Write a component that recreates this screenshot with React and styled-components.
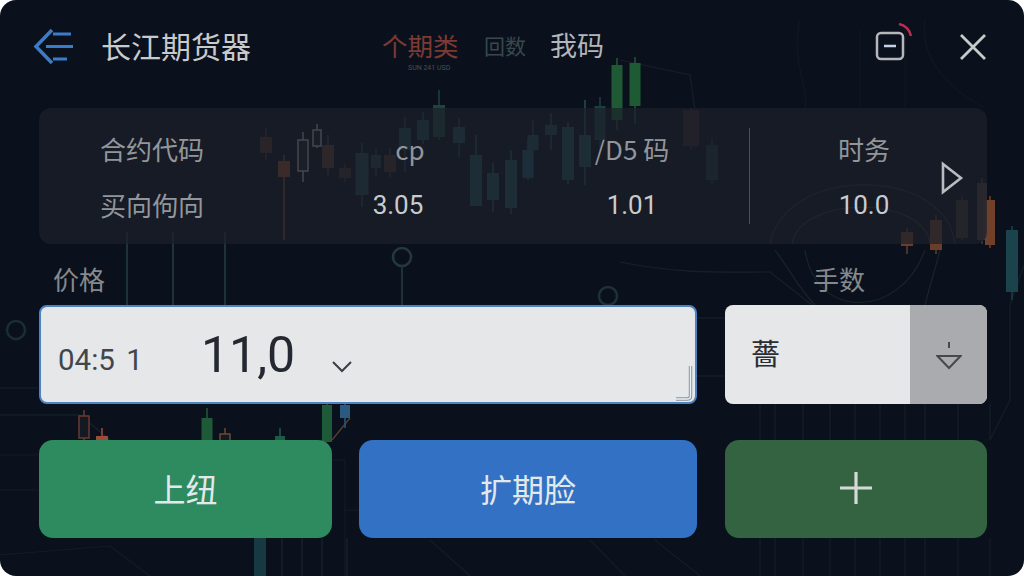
import React from 'react'
import styled, { createGlobalStyle } from 'styled-components'

const CJK = `"Noto Sans CJK SC", "Noto Sans", sans-serif`
const NUM = `Roboto, "Noto Sans CJK SC", sans-serif`

/* x, body top, body bottom, wick top, wick bottom, colour, body width, hollow */
const candles = [
  [266, 137, 153, 128, 160, '#4a2f27', 12],
  [284, 161, 177, 155, 240, '#8a452b', 12],
  [303, 140, 171, 132, 182, '#a5a8ac', 10, true],
  [317, 130, 146, 124, 148, '#a5a8ac', 8, true],
  [328, 145, 168, 135, 175, '#5a3a2c', 12],
  [345, 168, 178, 164, 182, '#3c2d28', 12],
  [362, 153, 195, 143, 207, '#24454c', 13],
  [376, 155, 168, 148, 177, '#2a3b40', 10],
  [390, 155, 172, 148, 177, '#47312a', 12],
  [405, 128, 150, 117, 172, '#1f4a4e', 12],
  [423, 120, 140, 112, 144, '#1f4a4e', 12],
  [439, 105, 137, 90, 140, '#1d4440', 12],
  [459, 127, 143, 118, 157, '#1f4a50', 12],
  [476, 155, 206, 135, 206, '#1f5058', 12],
  [493, 173, 200, 163, 212, '#1f5058', 12],
  [511, 160, 208, 150, 214, '#1f5058', 12],
  [528, 150, 178, 140, 180, '#1f5462', 11],
  [533, 135, 150, 120, 152, '#1f4a50', 11],
  [551, 125, 135, 113, 150, '#27474c', 12],
  [568, 127, 180, 122, 184, '#1f5058', 12],
  [585, 135, 167, 100, 185, '#1f5058', 12],
  [600, 106, 140, 97, 150, '#1c3f40', 11],
  [617, 65, 120, 58, 130, '#1e5a34', 11],
  [635, 63, 106, 57, 124, '#1e5a34', 11],
  [691, 110, 146, 108, 150, '#33272a', 16],
  [712, 145, 180, 138, 184, '#1d333a', 12],
  [907, 232, 246, 228, 254, '#6a3d2a', 12],
  [936, 220, 250, 215, 254, '#6a3d2a', 12],
  [962, 200, 238, 195, 240, '#3b3230', 12],
  [982, 183, 240, 178, 244, '#4a3a38', 10],
  [990, 200, 245, 196, 248, '#70402a', 10],
  [1012, 230, 292, 226, 300, '#1a434c', 12],
  [84, 416, 438, 410, 440, '#6a3a30', 10, true],
  [102, 436, 442, 428, 442, '#a04a3a', 12],
  [207, 418, 442, 408, 442, '#1f5a38', 11],
  [225, 434, 442, 428, 442, '#6a4a35', 10, true],
  [280, 436, 442, 428, 442, '#1f5a48', 10],
  [327, 405, 442, 400, 442, '#1f5a38', 10],
  [345, 405, 418, 402, 428, '#2a5a80', 10],
  [260, 538, 576, 538, 576, '#173a42', 12],
]

const rightTicks = [760, 775, 803, 830, 855, 880, 905, 925, 958, 990]

const ChartBackdrop = () => (
  <ChartSvg viewBox="0 0 1024 576">
    <g fill="none" stroke="#17242b" strokeWidth="1.2">
      <circle cx="402" cy="257" r="9" strokeWidth="2.5" stroke="#24393f" />
      <circle cx="16" cy="330" r="9" strokeWidth="2.5" stroke="#1b2d33" />
      <circle cx="608" cy="296" r="9" strokeWidth="2.5" stroke="#1f3239" />
      <path d="M127 232V305M173 232V305M225 232V305M402 266V305" stroke="#1e3338" strokeWidth="2" />
      <path d="M0 388H38M0 415H80L110 440M697 318H725M697 376H725" />
      <path d="M620 60L690 75L695 110V150" stroke="#161f26" />
      <path d="M620 262C680 274 720 272 770 272L812 305" stroke="#16222a" />
      <path d="M792 244C800 195 925 195 930 244" stroke="#2a313a" />
      <path d="M770 244C785 165 945 165 955 244" stroke="#262d36" />
      <path d="M805 250C815 320 900 320 925 250" stroke="#18242c" />
      <path d="M775 250C790 270 800 290 815 305M925 305C930 285 935 270 940 250" stroke="#18242c" />
      <path d="M1024 265L1010 305V400L990 440" stroke="#141f26" />
      <path d="M0 455H38M0 490H38M0 555L110 546L150 576M332 460H345L345 540V576M345 510H400M430 540L470 576M590 540L625 576M655 540L700 576M400 510H359" stroke="#141c24" />
      <path d="M332 440L350 418" stroke="#5a4030" />
      <path d="M800 20C790 60 810 90 805 108M860 30V108M905 30V108M925 20C920 60 950 90 985 108" stroke="#10181f" />
      {rightTicks.map(x => (
        <path key={x} d={`M${x} 403V440M${x} 538V576`} stroke="#151e26" />
      ))}
      <path d="M282 538V576M302 538V576M322 538V576M347 538V576" stroke="#17252a" />
    </g>
    {candles.map(([x, top, bottom, wickTop, wickBottom, colour, width, hollow]) => (
      <g key={`${x}-${top}`}>
        <line x1={x} x2={x} y1={wickTop} y2={wickBottom} stroke={colour} strokeWidth="1.5" />
        <rect
          x={x - width / 2}
          y={top}
          width={width}
          height={bottom - top}
          fill={hollow ? '#141922' : colour}
          stroke={hollow ? colour : 'none'}
          strokeWidth="1.5"
        />
      </g>
    ))}
  </ChartSvg>
)

const App = () => (
  <Frame>
    <GlobalStyle />
    <ChartBackdrop />
    <Header>
      <BackButton>
        <svg width="42" height="38" viewBox="0 0 42 38" fill="none" stroke="#3b7cc9" strokeWidth="3">
          <path d="M19 2L3 18.5L19 35" strokeWidth="3.5" />
          <path d="M20 6H38M13 18.5H40M20 31H34" />
        </svg>
      </BackButton>
      <Title>长江期货器</Title>
      <Tab $colour="#7c3a33" $width="102px">
        个期类
        <TabNote>SUN 241 USD</TabNote>
      </Tab>
      <Tab $colour="#3a474d" $width="66px" $size="21px">回数</Tab>
      <Tab $colour="#b4b6b9" $size="27px">我码</Tab>
      <Actions>
        <svg width="40" height="40" viewBox="0 0 40 40" fill="none">
          <rect x="2" y="11" width="26" height="26" rx="4" stroke="#b5b7ba" strokeWidth="2.5" />
          <path d="M9 24H21" stroke="#c4d4e8" strokeWidth="2.5" />
          <path d="M24 2C30 3 35 8 36 14" stroke="#c2294f" strokeWidth="2.5" />
        </svg>
        <svg width="28" height="28" viewBox="0 0 28 28" fill="none" stroke="#c8c9cb" strokeWidth="2.8">
          <path d="M2 2L26 26M26 2L2 26" />
        </svg>
      </Actions>
    </Header>

    <QuotePanel>
      <QuoteColumn $width="250px" $align="flex-start">
        <QuoteLabel>合约代码</QuoteLabel>
        <QuoteLabel>买向佝向</QuoteLabel>
      </QuoteColumn>
      <QuoteColumn $width="96px">
        <QuoteLabel $shift="24px">cp</QuoteLabel>
        <QuoteValue>3.05</QuoteValue>
      </QuoteColumn>
      <QuoteColumn $width="235px" $gap="69px" $divider>
        <QuoteLabel>/D5 码</QuoteLabel>
        <QuoteValue>1.01</QuoteValue>
      </QuoteColumn>
      <QuoteColumn $width="228px">
        <QuoteLabel>时务</QuoteLabel>
        <QuoteValue>10.0</QuoteValue>
      </QuoteColumn>
      <NextArrow width="24" height="34" viewBox="0 0 24 34" fill="none" stroke="#b9bcc0" strokeWidth="2.6">
        <path d="M3 3L21 17L3 31Z" />
      </NextArrow>
    </QuotePanel>

    <FieldLabels>
      <FieldLabel $indent="14px">价格</FieldLabel>
      <FieldLabel $indent="88px">手数</FieldLabel>
    </FieldLabels>

    <Fields>
      <PriceInput>
        <PriceTime>04:5 1</PriceTime>
        <PriceValue>11,0</PriceValue>
        <PriceCaret width="22" height="14" viewBox="0 0 22 14" fill="none" stroke="#3a3f45" strokeWidth="2">
          <path d="M2 3L11 12L20 3" />
        </PriceCaret>
        <ResizeGrip width="20" height="38" viewBox="0 0 20 38" fill="none">
          <path d="M15.5 2V32Q15.5 35 12 35H1" stroke="#8d9197" strokeWidth="3.4" />
          <path d="M15.5 2V32Q15.5 35 12 35H1" stroke="#e9f2fb" strokeWidth="1.4" />
        </ResizeGrip>
      </PriceInput>
      <LotSelect>
        <LotValue>薔</LotValue>
        <LotToggle>
          <svg width="26" height="30" viewBox="0 0 26 30" fill="none" stroke="#45494e" strokeWidth="2">
            <path d="M13 1V7" />
            <path d="M1.5 15H24.5L13 27Z" />
          </svg>
        </LotToggle>
      </LotSelect>
    </Fields>

    <Buttons>
      <OrderButtons>
        <ActionButton $bg="#2e8b60">上纽</ActionButton>
        <ActionButton $bg="#3271c4">扩期脸</ActionButton>
      </OrderButtons>
      <ActionButton $bg="#336341">
        <svg width="32" height="32" viewBox="0 0 32 32" stroke="#d6dad7" strokeWidth="3.2">
          <path d="M16 0V32M0 16H32" />
        </svg>
      </ActionButton>
    </Buttons>
  </Frame>
)

export default App

const GlobalStyle = createGlobalStyle`
  html, body {
    margin: 0;
    background: #fff;
  }
  * {
    box-sizing: border-box;
  }
`

const Frame = styled.div`
  position: relative;
  width: 1024px;
  height: 576px;
  padding: 0 37px 0 39px;
  border-radius: 16px;
  overflow: hidden;
  background: #0b111c;
  font-family: ${CJK};
`

const ChartSvg = styled.svg`
  position: absolute;
  inset: 0;
  width: 1024px;
  height: 576px;
`

const Header = styled.header`
  position: relative;
  display: flex;
  align-items: center;
  height: 94px;
  margin-left: -6px;
`

const BackButton = styled.div`
  display: flex;
  width: 68px;
`

const Title = styled.div`
  width: 281px;
  margin-top: -4px;
  font-size: 30px;
  line-height: 40px;
  color: #c9cacc;
`

const Tab = styled.div`
  position: relative;
  width: ${p => p.$width || 'auto'};
  margin-top: -5px;
  font-size: ${p => p.$size || '25.5px'};
  line-height: 26px;
  color: ${p => p.$colour};
  white-space: nowrap;
`

const TabNote = styled.span`
  position: absolute;
  left: 26px;
  top: 32px;
  font-family: ${NUM};
  font-size: 7px;
  line-height: 8px;
  color: #4a4d52;
`

const Actions = styled.div`
  display: flex;
  align-items: center;
  gap: 51px;
  margin-left: auto;
  & > svg:first-child {
    margin-top: -11px;
    margin-right: -7px;
  }
`

const QuotePanel = styled.section`
  position: relative;
  display: flex;
  align-items: center;
  height: 136px;
  margin-top: 14px;
  padding-left: 61px;
  border-radius: 12px;
  background: rgba(28, 32, 41, 0.72);
`

const QuoteColumn = styled.div`
  display: flex;
  flex-direction: column;
  justify-content: space-between;
  align-items: ${p => p.$align || 'center'};
  flex: none;
  width: ${p => p.$width};
  height: 96px;
  margin-left: ${p => p.$gap || 0};
  padding: 3px 0 1px;
  border-right: ${p => (p.$divider ? '1px solid #4a4f57' : 'none')};
`

const QuoteLabel = styled.div`
  height: 36px;
  margin-left: ${p => p.$shift || 0};
  font-size: 26px;
  line-height: 36px;
  color: #92969b;
`

const QuoteValue = styled.div`
  height: 36px;
  font-family: ${NUM};
  font-size: 26px;
  line-height: 36px;
  color: #c9cbce;
`

const NextArrow = styled.svg`
  position: absolute;
  left: 901px;
  top: 53px;
`

const FieldLabels = styled.div`
  position: relative;
  display: grid;
  grid-template-columns: 658px 1fr;
  column-gap: 28px;
  height: 61px;
  padding-top: 15px;
`

const FieldLabel = styled.div`
  padding-left: ${p => p.$indent};
  font-size: 26px;
  line-height: 40px;
  color: #85898e;
`

const Fields = styled.div`
  position: relative;
  display: grid;
  grid-template-columns: 658px 262px;
  column-gap: 28px;
  height: 99px;
`

const PriceInput = styled.div`
  position: relative;
  display: flex;
  align-items: center;
  padding: 0 0 0 17px;
  border: 2px solid #4d82c4;
  border-radius: 8px;
  background: #e6e7e9;
`

const PriceTime = styled.span`
  width: 143px;
  padding-top: 10px;
  font-family: ${NUM};
  font-size: 29.5px;
  word-spacing: 4px;
  color: #41464c;
  white-space: pre;
`

const PriceValue = styled.span`
  width: 130px;
  font-family: ${NUM};
  font-size: 50px;
  color: #242931;
`

const PriceCaret = styled.svg`
  margin-top: 22px;
`

const ResizeGrip = styled.svg`
  position: absolute;
  right: 0;
  bottom: 0;
`

const LotSelect = styled.div`
  display: grid;
  grid-template-columns: 185px 1fr;
  border-radius: 8px;
  overflow: hidden;
  background: #e6e7e9;
`

const LotValue = styled.div`
  display: flex;
  align-items: center;
  padding: 0 0 5px 26px;
  font-size: 29px;
  color: #2a2d32;
`

const LotToggle = styled.div`
  display: flex;
  align-items: center;
  justify-content: center;
  padding-top: 2px;
  background: #a9abae;
`

const Buttons = styled.div`
  position: relative;
  display: grid;
  grid-template-columns: 658px 262px;
  column-gap: 28px;
  height: 98px;
  margin-top: 36px;
`

const OrderButtons = styled.div`
  display: grid;
  grid-template-columns: 293px 338px;
  column-gap: 27px;
`

const ActionButton = styled.div`
  display: flex;
  align-items: center;
  justify-content: center;
  padding-bottom: 2px;
  border-radius: 14px;
  background: ${p => p.$bg};
  font-size: 32px;
  color: #e3e9ea;
`
